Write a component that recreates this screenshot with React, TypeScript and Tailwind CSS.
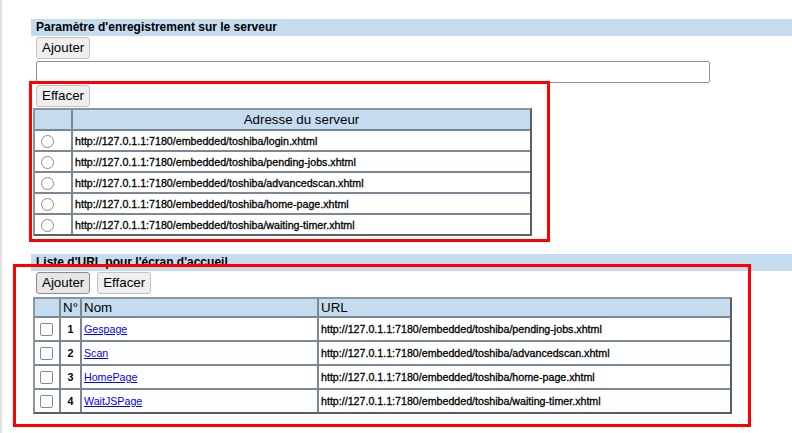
import React from 'react';

const serverUrls = [
  'http://127.0.1.1:7180/embedded/toshiba/login.xhtml',
  'http://127.0.1.1:7180/embedded/toshiba/pending-jobs.xhtml',
  'http://127.0.1.1:7180/embedded/toshiba/advancedscan.xhtml',
  'http://127.0.1.1:7180/embedded/toshiba/home-page.xhtml',
  'http://127.0.1.1:7180/embedded/toshiba/waiting-timer.xhtml',
];

const homeUrls = [
  { id: 1, name: 'Gespage', url: 'http://127.0.1.1:7180/embedded/toshiba/pending-jobs.xhtml' },
  { id: 2, name: 'Scan', url: 'http://127.0.1.1:7180/embedded/toshiba/advancedscan.xhtml' },
  { id: 3, name: 'HomePage', url: 'http://127.0.1.1:7180/embedded/toshiba/home-page.xhtml' },
  { id: 4, name: 'WaitJSPage', url: 'http://127.0.1.1:7180/embedded/toshiba/waiting-timer.xhtml' },
];

const Btn: React.FC<{ children: React.ReactNode; pressed?: boolean }> = ({ children, pressed }) => (
  <button
    type="button"
    className={
      pressed
        ? 'h-[22px] px-[5px] rounded-[3px] border border-[#8d8d8d] bg-[#e6e6e6] text-[13.33px] leading-[20px] text-black'
        : 'h-[22px] px-[5px] rounded-[3px] border border-[#c2c2c2] bg-[#efefef] text-[13.33px] leading-[20px] text-black'
    }
  >
    {children}
  </button>
);

const SectionBar: React.FC<{ title: string }> = ({ title }) => (
  <div className="h-[17px] bg-[#c5dcef] pl-[5px] text-[12px] font-bold leading-[17px] whitespace-nowrap">{title}</div>
);

export default function App() {
  return (
    <div className="relative w-[792px] h-[433px] overflow-hidden bg-white text-black font-['Liberation_Sans',Arial,sans-serif]">
      <div className="flex h-full">
        <div className="w-[2px] shrink-0 bg-[#e1e1e1]" />
        <div className="flex-1 pt-[19px] pl-[29px]">
          {/* Paramètre d'enregistrement */}
          <SectionBar title="Paramètre d'enregistrement sur le serveur" />
          <div className="flex pl-[5px] mt-[1px]">
            <Btn>Ajouter</Btn>
          </div>
          <div className="pl-[5px] mt-[2px]">
            <input
              type="text"
              className="block w-[674px] h-[22px] border border-[#8f8f9d] rounded-[2px] bg-white"
            />
          </div>
          <div className="flex pl-[5px] mt-[2px]">
            <Btn>Effacer</Btn>
          </div>
          <table className="ml-[2px] mt-[1px] w-[499px] table-fixed border-separate border-spacing-0 border-2 border-t-[#8a959f] border-l-[#8a959f] border-b-[#56606a] border-r-[#56606a]">
            <colgroup>
              <col className="w-[38px]" />
              <col />
            </colgroup>
            <thead>
              <tr>
                <th className="h-[21px] bg-[#c5dcef] border-r-2 border-b-2 border-[#7a8794]" />
                <th className="h-[21px] bg-[#c5dcef] border-b-2 border-[#7a8794] text-[13.33px] font-normal text-center leading-[19px]">
                  Adresse du serveur
                </th>
              </tr>
            </thead>
            <tbody>
              {serverUrls.map((u, i) => {
                const last = i === serverUrls.length - 1;
                return (
                  <tr key={u}>
                    <td className={last ? 'h-[19px] p-0 border-r-2 border-[#7a8794]' : 'h-[21px] p-0 border-r-2 border-b-2 border-[#7a8794]'}>
                      <input
                        type="radio"
                        name="server"
                        className="block appearance-none w-[13px] h-[13px] ml-[6px] mt-[1px] rounded-full border border-[#8b8b8b] bg-white"
                      />
                    </td>
                    <td className={last ? 'h-[19px] pl-[2px] text-[10.67px] [-webkit-text-stroke:0.3px_#000] whitespace-nowrap' : 'h-[21px] pl-[2px] text-[10.67px] [-webkit-text-stroke:0.3px_#000] whitespace-nowrap border-b-2 border-[#7a8794]'}>
                      {u}
                    </td>
                  </tr>
                );
              })}
            </tbody>
          </table>

          {/* Liste d'URL */}
          <div className="mt-[18px]">
            <SectionBar title="Liste d'URL pour l'écran d'accueil" />
          </div>
          <div className="pl-[5px] mt-[1px] flex gap-[7px]">
            <Btn pressed>Ajouter</Btn>
            <Btn>Effacer</Btn>
          </div>
          <table className="ml-[2px] mt-[3px] w-[699px] table-fixed border-separate border-spacing-0 border-2 border-t-[#8a959f] border-l-[#8a959f] border-b-[#56606a] border-r-[#56606a]">
            <colgroup>
              <col className="w-[26px]" />
              <col className="w-[21px]" />
              <col className="w-[237px]" />
              <col />
            </colgroup>
            <thead>
              <tr>
                <th className="h-[19px] bg-[#c5dcef] border-r-2 border-b-2 border-[#7a8794]" />
                <th className="h-[19px] bg-[#c5dcef] border-r-2 border-b-2 border-[#7a8794] text-[13.33px] font-normal text-center leading-[17px]">
                  N°
                </th>
                <th className="h-[19px] bg-[#c5dcef] border-r-2 border-b-2 border-[#7a8794] pl-[2px] text-[13.33px] font-normal text-left leading-[17px]">
                  Nom
                </th>
                <th className="h-[19px] bg-[#c5dcef] border-b-2 border-[#7a8794] pl-[2px] text-[13.33px] font-normal text-left leading-[17px]">
                  URL
                </th>
              </tr>
            </thead>
            <tbody>
              {homeUrls.map((r, i) => {
                const last = i === homeUrls.length - 1;
                return (
                  <tr key={r.id}>
                    <td className={last ? 'h-[22px] p-0 border-r-2 border-[#7a8794]' : 'h-[24px] p-0 border-r-2 border-b-2 border-[#7a8794]'}>
                      <input
                        type="checkbox"
                        className="block appearance-none w-[13px] h-[13px] ml-[5px] rounded-[2px] border border-[#8b8b8b] bg-white"
                      />
                    </td>
                    <td className={last ? 'h-[22px] p-0 text-center text-[10.67px] font-bold border-r-2 border-[#7a8794]' : 'h-[24px] p-0 text-center text-[10.67px] font-bold border-r-2 border-b-2 border-[#7a8794]'}>
                      {r.id}
                    </td>
                    <td className={last ? 'h-[22px] pl-[2px] text-[10.67px] border-r-2 border-[#7a8794]' : 'h-[24px] pl-[2px] text-[10.67px] border-r-2 border-b-2 border-[#7a8794]'}>
                      <a href="#" className="text-[#0000ee] underline">
                        {r.name}
                      </a>
                    </td>
                    <td className={last ? 'h-[22px] pl-[2px] text-[10.67px] [-webkit-text-stroke:0.3px_#000] whitespace-nowrap' : 'h-[24px] pl-[2px] text-[10.67px] [-webkit-text-stroke:0.3px_#000] whitespace-nowrap border-b-2 border-[#7a8794]'}>
                      {r.url}
                    </td>
                  </tr>
                );
              })}
            </tbody>
          </table>
        </div>
      </div>

      {/* Annotation boxes drawn over the page */}
      <div className="absolute left-[29px] top-[81px] w-[521px] h-[161px] border-[3px] border-[#ff0000] pointer-events-none" />
      <div className="absolute left-[13px] top-[264px] w-[738px] h-[163px] border-[3px] border-[#ff0000] pointer-events-none" />
    </div>
  );
}
